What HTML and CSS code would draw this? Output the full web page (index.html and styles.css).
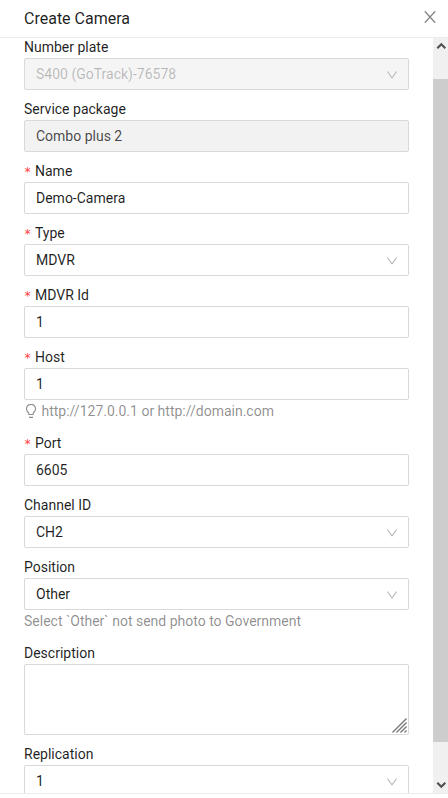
FILE: index.html
```html
<!DOCTYPE html>
<html lang="en">
<head>
<meta charset="utf-8">
<title>Create Camera</title>
<link rel="stylesheet" href="styles.css">
</head>
<body>
<svg width="0" height="0" class="defs">
  <symbol id="down" viewBox="64 64 896 896"><path d="M884 256h-75c-5.100 0-9.900 2.500-12.900 6.600L512 654.200 227.900 262.600c-3-4.100-7.800-6.600-12.900-6.600h-75c-6.500 0-10.300 7.400-6.500 12.700l352.600 486.100c12.800 17.600 39 17.600 51.700 0l352.600-486.100c3.900-5.300.1-12.700-6.400-12.700z"/></symbol>
</svg>
<div class="drawer">
  <header class="header">
    <h1 class="title">Create Camera</h1>
    <svg class="close" viewBox="0 0 12 12"><path d="M.8.3 11.200 11.700M11.200.3.8 11.700"/></svg>
  </header>
  <main class="body">
    <form class="form">
      <div class="field">
        <label class="label">Number plate</label>
        <div class="control disabled"><span>S400 (GoTrack)-76578</span><svg class="arrow"><use href="#down"/></svg></div>
      </div>
      <div class="field">
        <label class="label">Service package</label>
        <div class="control readonly"><span>Combo plus 2</span></div>
      </div>
      <div class="field">
        <label class="label required">Name</label>
        <div class="control"><span>Demo-Camera</span></div>
      </div>
      <div class="field">
        <label class="label required">Type</label>
        <div class="control"><span>MDVR</span><svg class="arrow"><use href="#down"/></svg></div>
      </div>
      <div class="field">
        <label class="label required">MDVR Id</label>
        <div class="control"><span>1</span></div>
      </div>
      <div class="field with-help">
        <label class="label required">Host</label>
        <div class="control"><span>1</span></div>
        <div class="help"><svg class="bulb" viewBox="0 0 14 14"><path d="M4.700 9.900V8.700A4.500 4.500 0 1 1 9.300 8.700V9.900a.6.600 0 0 1-.6.600H5.300a.6.600 0 0 1-.6-.6zM5 13.400H9"/></svg><span>http://127.0.0.1 or http://domain.com</span></div>
      </div>
      <div class="field">
        <label class="label required">Port</label>
        <div class="control"><span>6605</span></div>
      </div>
      <div class="field">
        <label class="label">Channel ID</label>
        <div class="control"><span>CH2</span><svg class="arrow"><use href="#down"/></svg></div>
      </div>
      <div class="field with-help">
        <label class="label">Position</label>
        <div class="control"><span>Other</span><svg class="arrow"><use href="#down"/></svg></div>
        <div class="help"><span>Select `Other` not send photo to Government</span></div>
      </div>
      <div class="field">
        <label class="label">Description</label>
        <div class="control textarea"><svg class="grip" viewBox="0 0 15 15"><path d="M.5 14.500 14.500.5M4.500 14.500 14.500 4.500M8.500 14.500 14.500 8.500M12.500 14.500 14.500 12.500"/></svg></div>
      </div>
      <div class="field">
        <label class="label">Replication</label>
        <div class="control"><span>1</span><svg class="arrow"><use href="#down"/></svg></div>
      </div>
    </form>
    <div class="scrollbar">
      <svg class="step" viewBox="0 0 15 17"><path d="M4.300 10.200 8.300 6.200 12.300 10.200"/></svg>
      <div class="thumb"></div>
      <svg class="step end" viewBox="0 0 15 17"><path d="M4.300 6.800 8.300 10.800 12.300 6.800"/></svg>
    </div>
  </main>
  <footer class="footer"></footer>
</div>
</body>
</html>
```

FILE: styles.css
```css
* { box-sizing: border-box; }
body {
  margin: 0;
  background: #fff;
  color: rgba(0, 0, 0, .88);
  font: 14px/22px Roboto, sans-serif;
}
.defs { display: block; }
.drawer { display: flex; flex-direction: column; height: 798px; overflow: hidden; }
.header {
  flex: none;
  display: flex;
  justify-content: space-between;
  align-items: center;
  height: 38px;
  padding: 0 12px 0 24px;
  border-bottom: 1px solid #ebebeb;
}
.title { margin: 0; font-size: 16px; line-height: 22px; font-weight: 400; }
.close { width: 12px; height: 12px; margin-top: -3px; fill: none; stroke: #808080; stroke-width: 1.3; }
.body { flex: 1; min-height: 0; display: flex; overflow: hidden; }
.form { width: 433px; margin-top: -2px; padding: 0 24px; }
.field { margin-bottom: 8px; }
.with-help { margin-bottom: 10px; }
.label { display: flex; height: 22px; }
.required::before {
  content: "*";
  width: 11px;
  color: #ff3b3e;
  font-family: "DejaVu Sans Mono", monospace;
  font-size: 12px;
  line-height: 24px;
}
.control {
  display: flex;
  justify-content: space-between;
  align-items: center;
  height: 32px;
  padding: 0 10px 0 11px;
  border: 1px solid #d9d9d9;
  border-radius: 2px;
}
.disabled { background: #f5f5f5; color: rgba(0, 0, 0, .25); }
.readonly { background: #f2f2f2; color: rgba(0, 0, 0, .72); }
.arrow { width: 12px; height: 12px; fill: #b5b5b5; margin-top: 2px; }
.help { display: flex; align-items: center; height: 22px; color: rgba(0, 0, 0, .45); }
.bulb { width: 14px; height: 14px; margin-right: 3.5px; fill: none; stroke: #8c8c8c; stroke-width: 1.1; }
.textarea { height: 71px; padding: 0 1px 1px; justify-content: flex-end; align-items: flex-end; }
.grip { width: 15px; height: 15px; fill: none; stroke: #777; stroke-width: 1.4; }
.scrollbar { width: 15px; display: flex; flex-direction: column; background: #f0f0f0; }
.step { flex: none; width: 15px; height: 17px; fill: none; stroke: #505050; stroke-width: 2.1; }
.thumb { height: 663px; margin-top: 24px; background: #cdcdcd; }
.end { margin-top: auto; }
.footer { flex: none; height: 5px; border-top: 1px solid #ebebeb; }
```
